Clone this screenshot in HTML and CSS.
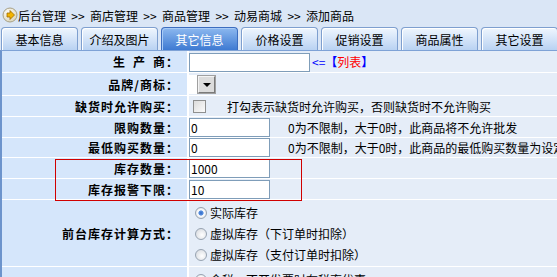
FILE: index.html
```html
<!DOCTYPE html>
<html lang="zh-CN">
<head>
  <meta charset="UTF-8" />
  <title>添加商品</title>
  <link rel="stylesheet" href="styles.css">
</head>
<body>
  <div class="crumb">
    <svg class="crumb-icon" viewBox="0 0 16 16" width="16" height="16">
      <defs>
        <radialGradient id="ball" cx="0.4" cy="0.35" r="0.7">
          <stop offset="0" stop-color="#ffffff" />
          <stop offset="1" stop-color="#d9d2b4" />
        </radialGradient>
      </defs>
      <circle cx="8" cy="8" r="7" fill="url(#ball)" stroke="#a8a186" stroke-width="1" />
      <polygon points="5,6 8,6 8,3.5 12.5,8 8,12.5 8,10 5,10" fill="#f3b400" stroke="#9c6a00" stroke-width="0.8" stroke-linejoin="round" />
    </svg>
    <span>后台管理</span><span class="sep">&gt;&gt;</span><span>商店管理</span><span class="sep">&gt;&gt;</span><span>商品管理</span><span class="sep">&gt;&gt;</span><span>动易商城</span><span class="sep">&gt;&gt;</span><span>添加商品</span>
  </div>

  <div class="tabs">
    <div class="tab">基本信息</div>
    <div class="tab">介绍及图片</div>
    <div class="tab active">其它信息</div>
    <div class="tab">价格设置</div>
    <div class="tab">促销设置</div>
    <div class="tab">商品属性</div>
    <div class="tab">其它设置</div>
  </div>

  <div class="form">
    <div class="row h21">
      <div class="label">生&ensp;产&ensp;商：</div>
      <div class="value">
        <input class="txt wide" type="text" value="" />
        <span class="pick">&lt;=<b>【</b><span class="red">列表</span><b>】</b></span>
      </div>
    </div>
    <div class="row h22">
      <div class="label">品牌/商标：</div>
      <div class="value">
        <span class="sel"><span class="sel-btn"></span></span>
      </div>
    </div>
    <div class="row h20">
      <div class="label">缺货时允许购买：</div>
      <div class="value">
        <input class="chk" type="checkbox" />
        <span class="hint-far">打勾表示缺货时允许购买，否则缺货时不允许购买</span>
      </div>
    </div>
    <div class="row h20">
      <div class="label">限购数量：</div>
      <div class="value">
        <input class="txt" type="text" value="0" />
        <span class="hint">0为不限制，大于0时，此商品将不允许批发</span>
      </div>
    </div>
    <div class="row h19">
      <div class="label">最低购买数量：</div>
      <div class="value">
        <input class="txt" type="text" value="0" />
        <span class="hint">0为不限制，大于0时，此商品的最低购买数量为设定的值</span>
      </div>
    </div>

    <div class="group">
      <div class="row h20">
        <div class="label">库存数量：</div>
        <div class="value">
          <input class="txt" type="text" value="1000" />
        </div>
      </div>
      <div class="row h20">
        <div class="label">库存报警下限：</div>
        <div class="value">
          <input class="txt" type="text" value="10" />
        </div>
      </div>
    </div>

    <div class="row">
      <div class="label mid">前台库存计算方式：</div>
      <div class="value options">
        <label class="opt"><input class="rad" type="radio" name="stock" checked />实际库存</label>
        <label class="opt"><input class="rad" type="radio" name="stock" />虚拟库存（下订单时扣除）</label>
        <label class="opt"><input class="rad" type="radio" name="stock" />虚拟库存（支付订单时扣除）</label>
      </div>
    </div>
    <div class="row">
      <div class="label mid">税率设置：</div>
      <div class="value options">
        <label class="opt"><input class="rad" type="radio" name="tax" checked />含税，不开发票时有税率优惠</label>
        <label class="opt"><input class="rad" type="radio" name="tax" />不含税</label>
      </div>
    </div>
  </div>
</body>
</html>
```

FILE: styles.css
```css
body {
  margin: 0;
  font-family: "Noto Sans CJK SC", "Liberation Sans", sans-serif;
  font-size: 12px;
  color: #000;
  background: #e5edf8;
  overflow: hidden;
}

.crumb {
  box-sizing: border-box;
  height: 26px;
  padding: 4px 0 0 2px;
  display: flex;
  align-items: center;
  background: #dae6f6;
  white-space: nowrap;
}

.crumb-icon {
  width: 16px;
  height: 16px;
}

.sep {
  display: inline-block;
  width: 24px;
  text-align: center;
}

.tabs {
  display: flex;
  align-items: flex-end;
  height: 24px;
  padding-left: 1px;
  background: #dae6f6;
}

.tab {
  box-sizing: border-box;
  flex: none;
  width: 77px;
  height: 23px;
  margin-right: 3px;
  border: 1px solid #7e9fcf;
  border-bottom: none;
  border-radius: 4px 4px 0 0;
  background: linear-gradient(#eff6fe, #b9d2f2);
  box-shadow: inset 1px 1px 0 #fff;
  text-align: center;
  line-height: 24px;
}

.tab.active {
  border-color: #3c6dbf;
  background: linear-gradient(#8cb8ef, #3e7ad2);
  box-shadow: inset 1px 1px 0 #a8cbf7;
  color: #fff;
}

.form {
  border-top: 1px solid #7ea2d6;
  border-left: 2px solid #6d94cc;
}

.row {
  display: flex;
  border-bottom: 1px solid #fff;
}

.h19 { height: 19px; }
.h20 { height: 20px; }
.h21 { height: 21px; }
.h22 { height: 22px; }

.label {
  box-sizing: border-box;
  flex: none;
  width: 185px;
  padding-right: 8px;
  display: flex;
  align-items: center;
  justify-content: flex-end;
  background: #d5e6fb;
  font-weight: bold;
  letter-spacing: 1px;
  white-space: nowrap;
}

.value {
  flex: 1;
  display: flex;
  align-items: center;
  border-left: 2px solid #fff;
  background: #e5edf8;
  white-space: nowrap;
}

.txt {
  box-sizing: border-box;
  width: 81px;
  height: 19px;
  margin: 0;
  padding: 0 1px;
  border: 1px solid #7f9db9;
  background: #fff;
  font-family: "Noto Sans CJK SC", "Liberation Sans", sans-serif;
  font-size: 12px;
  line-height: 17px;
}

.txt.wide {
  width: 121px;
  margin-top: 2px;
}

.pick {
  margin-left: 2px;
  color: #0000ff;
}

.red {
  color: #ff0000;
}

.sel {
  box-sizing: border-box;
  display: inline-flex;
  width: 27px;
  height: 19px;
  padding: 1px;
  background: #fff;
}

.sel-btn {
  box-sizing: border-box;
  margin-left: auto;
  width: 17px;
  height: 17px;
  border: 1px solid #7a7a7a;
  border-top-color: #f4f4f4;
  border-left-color: #f4f4f4;
  box-shadow: 0 0 0 1px #a0a0a0;
  background: #dcdcdc;
  display: flex;
  align-items: center;
  justify-content: center;
}

.sel-btn::after {
  content: "";
  border-left: 4px solid transparent;
  border-right: 4px solid transparent;
  border-top: 4px solid #000;
  margin-top: 1px;
}

.chk {
  appearance: none;
  box-sizing: border-box;
  width: 13px;
  height: 13px;
  margin: 1px 0 0 4px;
  border: 1px solid #8e8f8f;
  background: linear-gradient(135deg, #dcdcdc, #fbfbfb);
}

.hint-far {
  margin-left: 21px;
}

.hint {
  margin-left: 18px;
}

.group {
  position: relative;
}

/* red highlight frame drawn over the two stock rows */
.group::after {
  content: "";
  position: absolute;
  left: 53px;
  top: 1px;
  width: 247px;
  height: 42px;
  box-sizing: border-box;
  border: 1px solid #d00000;
  pointer-events: none;
}

.label.mid {
  align-self: stretch;
}

.options {
  flex-direction: column;
  align-items: flex-start;
  padding: 2px 0 1px 6px;
}

.opt {
  display: flex;
  align-items: center;
  height: 21px;
}

.rad {
  appearance: none;
  box-sizing: border-box;
  width: 12px;
  height: 12px;
  margin: 0 3px 0 0;
  border: 1px solid #97a3b1;
  border-radius: 50%;
  background: radial-gradient(circle at 60% 60%, #ffffff 0, #d6d9de 90%);
}

.rad:checked {
  background: radial-gradient(circle, #2f68c8 0, #5d93e0 2.2px, #ffffff 3px, #d6d9de 90%);
}
```
